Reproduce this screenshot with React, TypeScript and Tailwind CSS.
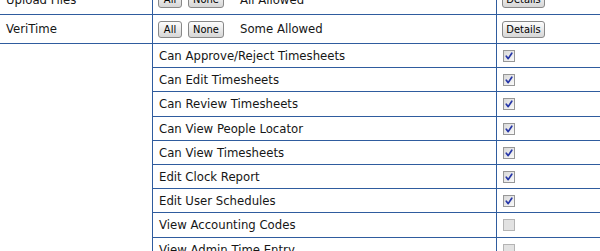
import React from "react";

const LINE = "border-[#2f5c9e]";

function Btn({ label, w }: { label: string; w: string }) {
  return (
    <span
      className={`inline-flex h-[17px] items-center justify-center rounded-[3px] border border-[#888888] bg-gradient-to-b from-[#fdfdfd] to-[#d6d6d6] text-[11px] leading-none text-black ${w}`}
    >
      {label}
    </span>
  );
}

function Check({ checked }: { checked: boolean }) {
  return (
    <span
      className={`relative inline-block h-[12px] w-[12px] border ${
        checked
          ? "border-[#979797] bg-gradient-to-br from-[#d8d8d8] to-[#fafafa]"
          : "border-[#b4b4b4] bg-[#e2e2e2]"
      }`}
    >
      {checked && (
        <svg viewBox="0 0 10 10" className="absolute left-0 top-0 h-[10px] w-[10px]">
          <path d="M2.3 5.2 L4.2 7.6 L7.8 2.2" fill="none" stroke="#2737a8" strokeWidth="1.7" strokeLinecap="round" strokeLinejoin="round" />
        </svg>
      )}
    </span>
  );
}

const perms: { name: string; checked: boolean; h: string }[] = [
  { name: "Can Approve/Reject Timesheets", checked: true, h: "h-[24px]" },
  { name: "Can Edit Timesheets", checked: true, h: "h-[24px]" },
  { name: "Can Review Timesheets", checked: true, h: "h-[25px]" },
  { name: "Can View People Locator", checked: true, h: "h-[24px]" },
  { name: "Can View Timesheets", checked: true, h: "h-[24px]" },
  { name: "Edit Clock Report", checked: true, h: "h-[24px]" },
  { name: "Edit User Schedules", checked: true, h: "h-[24px]" },
  { name: "View Accounting Codes", checked: false, h: "h-[25px]" },
  { name: "View Admin Time Entry", checked: false, h: "h-[24px]" },
  { name: "View Something Else", checked: false, h: "h-[24px]" },
];

function TopRow({ name, status, h }: { name: string; status: string; h: string }) {
  return (
    <div className={`flex ${h} border-b ${LINE}`}>
      <div className={`flex w-[153px] shrink-0 items-center border-r ${LINE} pl-[6px]`}>{name}</div>
      <div className={`flex w-[344px] shrink-0 items-center border-r ${LINE} pl-[5px]`}>
        <Btn label="All" w="w-[24px]" />
        <span className="w-[6px]" />
        <Btn label="None" w="w-[36px]" />
        <span className="ml-[16px]">{status}</span>
      </div>
      <div className="flex flex-1 items-center pl-[5px]">
        <Btn label="Details" w="w-[43px]" />
      </div>
    </div>
  );
}

export default function App() {
  return (
    <div
      className="h-[251px] w-[600px] overflow-hidden bg-white text-[13px] text-[#161616]"
      style={{ fontFamily: '"DejaVu Sans Condensed", "DejaVu Sans", sans-serif' }}
    >
      <div className="-mt-[15px] w-[640px]">
        <TopRow name="Upload Files" status="All Allowed" h="h-[30px]" />
        <TopRow name="VeriTime" status="Some Allowed" h="h-[29px]" />
        <div className="flex">
          <div className={`w-[153px] shrink-0 border-r ${LINE}`} />
          <div className="flex flex-1 flex-col">
            {perms.map((p) => (
              <div key={p.name} className={`flex ${p.h} border-b ${LINE}`}>
                <div className={`flex w-[344px] shrink-0 items-center border-r ${LINE} pl-[6px]`}>{p.name}</div>
                <div className="flex flex-1 items-center pl-[6px]">
                  <Check checked={p.checked} />
                </div>
              </div>
            ))}
          </div>
        </div>
      </div>
    </div>
  );
}
